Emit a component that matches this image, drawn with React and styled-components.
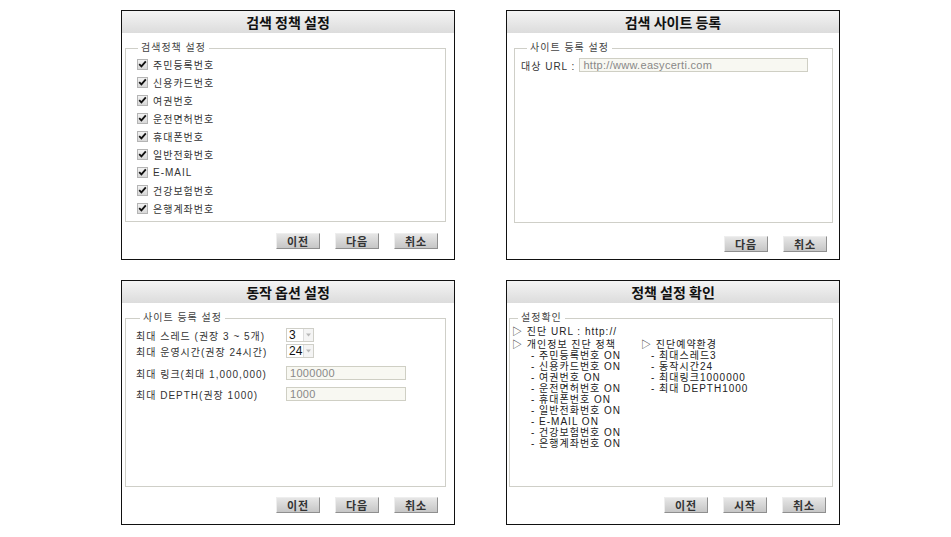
import styled, { createGlobalStyle } from 'styled-components';

const GlobalStyle = createGlobalStyle`
    body {
        margin: 0;
        background: #fff;
        font-family: "Liberation Sans", "Noto Sans CJK KR", sans-serif;
        color: #222;
    }
`;

const policies = [
    '주민등록번호', '신용카드번호', '여권번호', '운전면허번호', '휴대폰번호',
    '일반전화번호', 'E-MAIL', '건강보험번호', '은행계좌번호',
];

const schedule = ['- 최대스레드3', '- 동작시간24', '- 최대링크1000000', '- 최대 DEPTH1000'];

const CheckMark = () => (
    <svg width="9" height="8" viewBox="0 0 9 8">
        <path d="M1.2 4.2 L3.4 6.4 L7.8 1.4" fill="none" stroke="#111" strokeWidth="1.8" />
    </svg>
);

const SelectArrow = () => (
    <svg width="5" height="4" viewBox="0 0 5 4">
        <path d="M0 0.5 L5 0.5 L2.5 3.5 Z" fill="#b8b8b8" />
    </svg>
);

const Buttons = ({ labels, $top, $bottom, $right }) => (
    <ButtonRow $top={$top} $bottom={$bottom} $right={$right}>
        {labels.map(l => <Button key={l}>{l}</Button>)}
    </ButtonRow>
);

const App = () => {
    return (
        <>
            <GlobalStyle />
            <Board>
                <Panel $h={250}>
                    <Title>검색 정책 설정</Title>
                    <Group $left={3} $right={8}>
                        <Legend $ml={10}>검색정책 설정</Legend>
                        {policies.map(p => (
                            <CheckRow key={p}>
                                <CheckBox><CheckMark /></CheckBox>
                                {p}
                            </CheckRow>
                        ))}
                    </Group>
                    <Buttons labels={['이전', '다음', '취소']} $top={11} $bottom={10} $right={16} />
                </Panel>

                <Panel $h={250}>
                    <Title>검색 사이트 등록</Title>
                    <Group $left={7} $right={6}>
                        <Legend $ml={10}>사이트 등록 설정</Legend>
                        <UrlRow>
                            <span>대상 URL :</span>
                            <TextBox $w={229}>http://www.easycerti.com</TextBox>
                        </UrlRow>
                    </Group>
                    <Buttons labels={['다음', '취소']} $top={13} $bottom={7} $right={12} />
                </Panel>

                <Panel $h={245}>
                    <Title>동작 옵션 설정</Title>
                    <Group $left={3} $right={8}>
                        <Legend $ml={12}>사이트 등록 설정</Legend>
                        <OptionRow $top={3}>
                            <OptionLabel>최대 스레드 (권장 3 ~ 5개)</OptionLabel>
                            <Select>
                                <SelectValue>3</SelectValue>
                                <SelectButton><SelectArrow /></SelectButton>
                            </Select>
                        </OptionRow>
                        <OptionRow $top={2}>
                            <OptionLabel>최대 운영시간(권장 24시간)</OptionLabel>
                            <Select>
                                <SelectValue>24</SelectValue>
                                <SelectButton><SelectArrow /></SelectButton>
                            </Select>
                        </OptionRow>
                        <OptionRow $top={8}>
                            <OptionLabel>최대 링크(최대 1,000,000)</OptionLabel>
                            <TextBox $w={120}>1000000</TextBox>
                        </OptionRow>
                        <OptionRow $top={7}>
                            <OptionLabel>최대 DEPTH(권장 1000)</OptionLabel>
                            <TextBox $w={120}>1000</TextBox>
                        </OptionRow>
                    </Group>
                    <Buttons labels={['이전', '다음', '취소']} $top={10} $bottom={11} $right={16} />
                </Panel>

                <Panel $h={245}>
                    <Title>정책 설정 확인</Title>
                    <Group $left={2} $right={6}>
                        <Legend $ml={6}>설정확인</Legend>
                        <Summary>
                            <SummaryHead>▷ 진단 URL : http://</SummaryHead>
                            <SummaryCols>
                                <SummaryCol>
                                    <div>▷ 개인정보 진단 정책</div>
                                    {policies.map(p => (
                                        <SummaryItem key={p} $indent={19}>- {p} ON</SummaryItem>
                                    ))}
                                </SummaryCol>
                                <SummaryCol>
                                    <div>▷ 진단예약환경</div>
                                    {schedule.map(s => (
                                        <SummaryItem key={s} $indent={10}>{s}</SummaryItem>
                                    ))}
                                </SummaryCol>
                            </SummaryCols>
                        </Summary>
                    </Group>
                    <Buttons labels={['이전', '시작', '취소']} $top={10} $bottom={11} $right={13} />
                </Panel>
            </Board>
        </>
    );
};

const Board = styled.div`
    display: grid;
    grid-template-columns: 334px 334px;
    grid-template-rows: 250px 245px;
    column-gap: 51px;
    row-gap: 20px;
    padding: 10px 0 0 121px;
`;

const Panel = styled.section`
    box-sizing: border-box;
    height: ${p => p.$h}px;
    border: 1px solid #111;
    display: flex;
    flex-direction: column;
    background: #fff;
`;

const Title = styled.h2`
    margin: 0;
    height: 22px;
    line-height: 22px;
    text-align: center;
    font-family: "Noto Sans CJK KR", sans-serif;
    font-size: 14px;
    font-weight: bold;
    color: #111;
    background: linear-gradient(#f4f4f4, #dcdcdc);
`;

const Group = styled.fieldset`
    flex: 1;
    min-height: 0;
    margin: 8px ${p => p.$right}px 0 ${p => p.$left}px;
    padding: 0 2px;
    border: 1px solid #cfcfc8;
    font-size: 10px;
    letter-spacing: 1px;
    color: #333;
`;

const Legend = styled.legend`
    margin-left: ${p => p.$ml}px;
    padding: 0 3px;
    font-size: 10px;
    line-height: 14px;
    color: #444;
`;

const CheckRow = styled.label`
    display: flex;
    align-items: center;
    gap: 5px;
    height: 18px;
    padding-left: 9px;
    color: #333;
`;

const CheckBox = styled.span`
    box-sizing: border-box;
    width: 11px;
    height: 11px;
    display: flex;
    align-items: center;
    justify-content: center;
    border: 1px solid #b4b4b4;
    background: linear-gradient(#f2f2f2, #d8d8d8);
`;

const UrlRow = styled.div`
    display: flex;
    align-items: center;
    gap: 4px;
    height: 14px;
    margin-top: 3px;
    padding-left: 4px;
    color: #333;
`;

const TextBox = styled.div`
    box-sizing: border-box;
    width: ${p => p.$w}px;
    height: 14px;
    line-height: 12px;
    padding-left: 3px;
    border: 1px solid #cfcfc4;
    background: #f8f8f2;
    color: #888;
    font-size: 11px;
    letter-spacing: 0.3px;
`;

const OptionRow = styled.div`
    display: flex;
    align-items: center;
    height: 14px;
    margin-top: ${p => p.$top}px;
    padding-left: 8px;
`;

const OptionLabel = styled.span`
    width: 150px;
    flex: none;
    color: #333;
    white-space: nowrap;
`;

const Select = styled.div`
    box-sizing: border-box;
    display: flex;
    width: 28px;
    height: 14px;
    border: 1px solid #cfcfc8;
    background: #fff;
    letter-spacing: 0;
`;

const SelectValue = styled.span`
    flex: 1;
    padding-left: 2px;
    line-height: 12px;
    font-size: 12px;
    color: #111;
`;

const SelectButton = styled.span`
    width: 9px;
    display: flex;
    align-items: center;
    justify-content: center;
    border-left: 1px solid #ddd;
    background: #f4f4f4;
`;

const Summary = styled.div`
    padding-top: 1px;
    line-height: 11px;
    color: #222;
`;

const SummaryHead = styled.div`
    margin-bottom: 2px;
`;

const SummaryCols = styled.div`
    display: grid;
    grid-template-columns: 129px auto;
`;

const SummaryCol = styled.div`
    display: flex;
    flex-direction: column;
    white-space: nowrap;
`;

const SummaryItem = styled.div`
    padding-left: ${p => p.$indent}px;
`;

const ButtonRow = styled.div`
    display: flex;
    justify-content: flex-end;
    gap: 15px;
    height: 16px;
    margin: ${p => p.$top}px ${p => p.$right}px ${p => p.$bottom}px 0;
`;

const Button = styled.button`
    box-sizing: border-box;
    width: 44px;
    height: 16px;
    padding: 0;
    border: 1px solid;
    border-color: #eee #8f8f8f #8f8f8f #eee;
    background: linear-gradient(#e6e6e6, #c6c6c6);
    font-family: "Noto Sans CJK KR", sans-serif;
    font-size: 11px;
    font-weight: bold;
    line-height: 14px;
    letter-spacing: 1px;
    color: #333;
`;

export default App;
